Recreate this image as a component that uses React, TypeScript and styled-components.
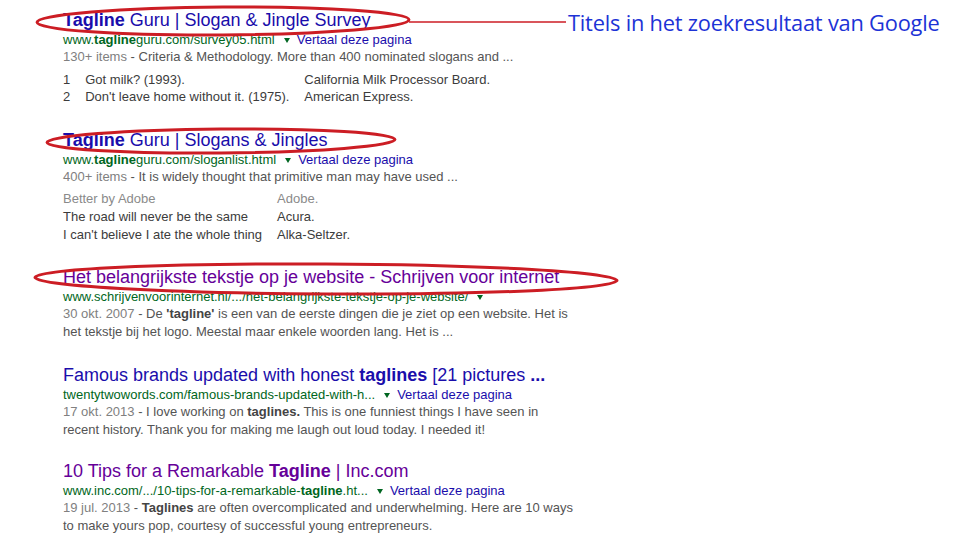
import React from "react";
import styled, { createGlobalStyle } from "styled-components";

const Global = createGlobalStyle`
  html, body { margin: 0; padding: 0; background: #fff; }
  body { font-family: Arial, "Liberation Sans", sans-serif; }
`;

const Page = styled.div`
  position: relative;
  width: 977px;
  height: 556px;
  overflow: hidden;
  background: #fff;
  box-sizing: border-box;
  padding: 9px 0 0 63px;
`;

const Results = styled.div`
  display: flex;
  flex-direction: column;
  align-items: flex-start;
  width: 560px;
`;

const Result = styled.div<{ $gap: number }>`
  display: flex;
  flex-direction: column;
  align-items: flex-start;
  margin-bottom: ${(p) => p.$gap}px;
`;

const Title = styled.div<{ $visited?: boolean }>`
  font-size: 18px;
  line-height: 22px;
  color: ${(p) => (p.$visited ? "#660099" : "#1a0dab")};
  white-space: nowrap;
  b { font-weight: bold; }
`;

const UrlLine = styled.div`
  display: flex;
  align-items: center;
  font-size: 13px;
  line-height: 17px;
  white-space: nowrap;
`;

const Cite = styled.span`
  color: #006621;
  b { font-weight: bold; }
`;

const Caret = styled.span`
  display: inline-block;
  width: 0;
  height: 0;
  border-left: 3.5px solid transparent;
  border-right: 3.5px solid transparent;
  border-top: 5px solid #006621;
  margin: 1px 7px 0 9px;
`;

const Translate = styled.span`
  color: #1a0dab;
`;

const Snippet = styled.div`
  font-size: 13px;
  line-height: 18px;
  color: #545454;
  b { color: #444; font-weight: bold; }
`;

const Meta = styled.span`
  color: #808080;
`;

const Table = styled.table<{ $rowH: number; $top: number }>`
  border-collapse: collapse;
  margin-top: ${(p) => p.$top}px;
  font-size: 13px;
  color: #3c3c3c;
  td, th {
    padding: 0 15px 0 0;
    height: ${(p) => p.$rowH}px;
    line-height: ${(p) => p.$rowH}px;
    text-align: left;
    white-space: nowrap;
    vertical-align: middle;
  }
  th { font-weight: normal; color: #8a8a8a; }
`;

const Overlay = styled.svg`
  position: absolute;
  left: 0;
  top: 0;
  pointer-events: none;
`;

const Callout = styled.div`
  position: absolute;
  left: 568px;
  top: 8px;
  font-family: "Open Sans", sans-serif;
  font-size: 21.8px;
  line-height: 30px;
  color: #1d33d6;
  white-space: nowrap;
  letter-spacing: -0.2px;
`;

const Dropdown = () => <Caret />;

export default function App() {
  return (
    <>
      <Global />
      <Page>
        <Results>
          <Result $gap={24}>
            <Title>
              <b>Tagline</b> Guru | Slogan &amp; Jingle Survey
            </Title>
            <UrlLine>
              <Cite>
                www.<b>tagline</b>guru.com/survey05.html
              </Cite>
              <Dropdown />
              <Translate>Vertaal deze pagina</Translate>
            </UrlLine>
            <Snippet>
              <Meta>130+ items</Meta> - Criteria &amp; Methodology. More than 400 nominated slogans and ...
            </Snippet>
            <Table $rowH={17} $top={5}>
              <tbody>
                <tr>
                  <td>1</td>
                  <td>Got milk? (1993).</td>
                  <td>California Milk Processor Board.</td>
                </tr>
                <tr>
                  <td>2</td>
                  <td>Don't leave home without it. (1975).</td>
                  <td>American Express.</td>
                </tr>
              </tbody>
            </Table>
          </Result>

          <Result $gap={22}>
            <Title>
              <b>Tagline</b> Guru | Slogans &amp; Jingles
            </Title>
            <UrlLine>
              <Cite>
                www.<b>tagline</b>guru.com/sloganlist.html
              </Cite>
              <Dropdown />
              <Translate>Vertaal deze pagina</Translate>
            </UrlLine>
            <Snippet>
              <Meta>400+ items</Meta> - It is widely thought that primitive man may have used ...
            </Snippet>
            <Table $rowH={18} $top={4}>
              <thead>
                <tr>
                  <th>Better by Adobe</th>
                  <th>Adobe.</th>
                </tr>
              </thead>
              <tbody>
                <tr>
                  <td>The road will never be the same</td>
                  <td>Acura.</td>
                </tr>
                <tr>
                  <td>I can't believe I ate the whole thing</td>
                  <td>Alka-Seltzer.</td>
                </tr>
              </tbody>
            </Table>
          </Result>

          <Result $gap={23}>
            <Title $visited>Het belangrijkste tekstje op je website - Schrijven voor internet</Title>
            <UrlLine>
              <Cite>www.schrijvenvoorinternet.nl/.../het-belangrijkste-tekstje-op-je-website/</Cite>
              <Dropdown />
            </UrlLine>
            <Snippet>
              <Meta>30 okt. 2007</Meta> - De <b>'tagline'</b> is een van de eerste dingen die je ziet op een website. Het is
              <br />
              het tekstje bij het logo. Meestal maar enkele woorden lang. Het is ...
            </Snippet>
          </Result>

          <Result $gap={21}>
            <Title>
              Famous brands updated with honest <b>taglines</b> [21 pictures <b>...</b>
            </Title>
            <UrlLine>
              <Cite>twentytwowords.com/famous-brands-updated-with-h...</Cite>
              <Dropdown />
              <Translate>Vertaal deze pagina</Translate>
            </UrlLine>
            <Snippet>
              <Meta>17 okt. 2013</Meta> - I love working on <b>taglines.</b> This is one funniest things I have seen in
              <br />
              recent history. Thank you for making me laugh out loud today. I needed it!
            </Snippet>
          </Result>

          <Result $gap={0}>
            <Title $visited>
              10 Tips for a Remarkable <b>Tagline</b> | Inc.com
            </Title>
            <UrlLine>
              <Cite>
                www.inc.com/.../10-tips-for-a-remarkable-<b>tagline</b>.ht...
              </Cite>
              <Dropdown />
              <Translate>Vertaal deze pagina</Translate>
            </UrlLine>
            <Snippet>
              <Meta>19 jul. 2013</Meta> - <b>Taglines</b> are often overcomplicated and underwhelming. Here are 10 ways
              <br />
              to make yours pop, courtesy of successful young entrepreneurs.
            </Snippet>
          </Result>
        </Results>

        <Overlay width={977} height={556} viewBox="0 0 977 556">
          <g fill="none" stroke="#cc1d24">
            <ellipse cx={223} cy={21} rx={186} ry={14} strokeWidth={3} transform="rotate(-0.4 223 21)" />
            <ellipse cx={221} cy={141} rx={174} ry={12} strokeWidth={3} transform="rotate(-0.5 221 141)" />
            <ellipse cx={326} cy={279} rx={291} ry={15} strokeWidth={3} transform="rotate(0.3 326 279)" />
            <line x1={409} y1={22} x2={566} y2={22} strokeWidth={1.3} />
          </g>
        </Overlay>
        <Callout>Titels in het zoekresultaat van Google</Callout>
      </Page>
    </>
  );
}
